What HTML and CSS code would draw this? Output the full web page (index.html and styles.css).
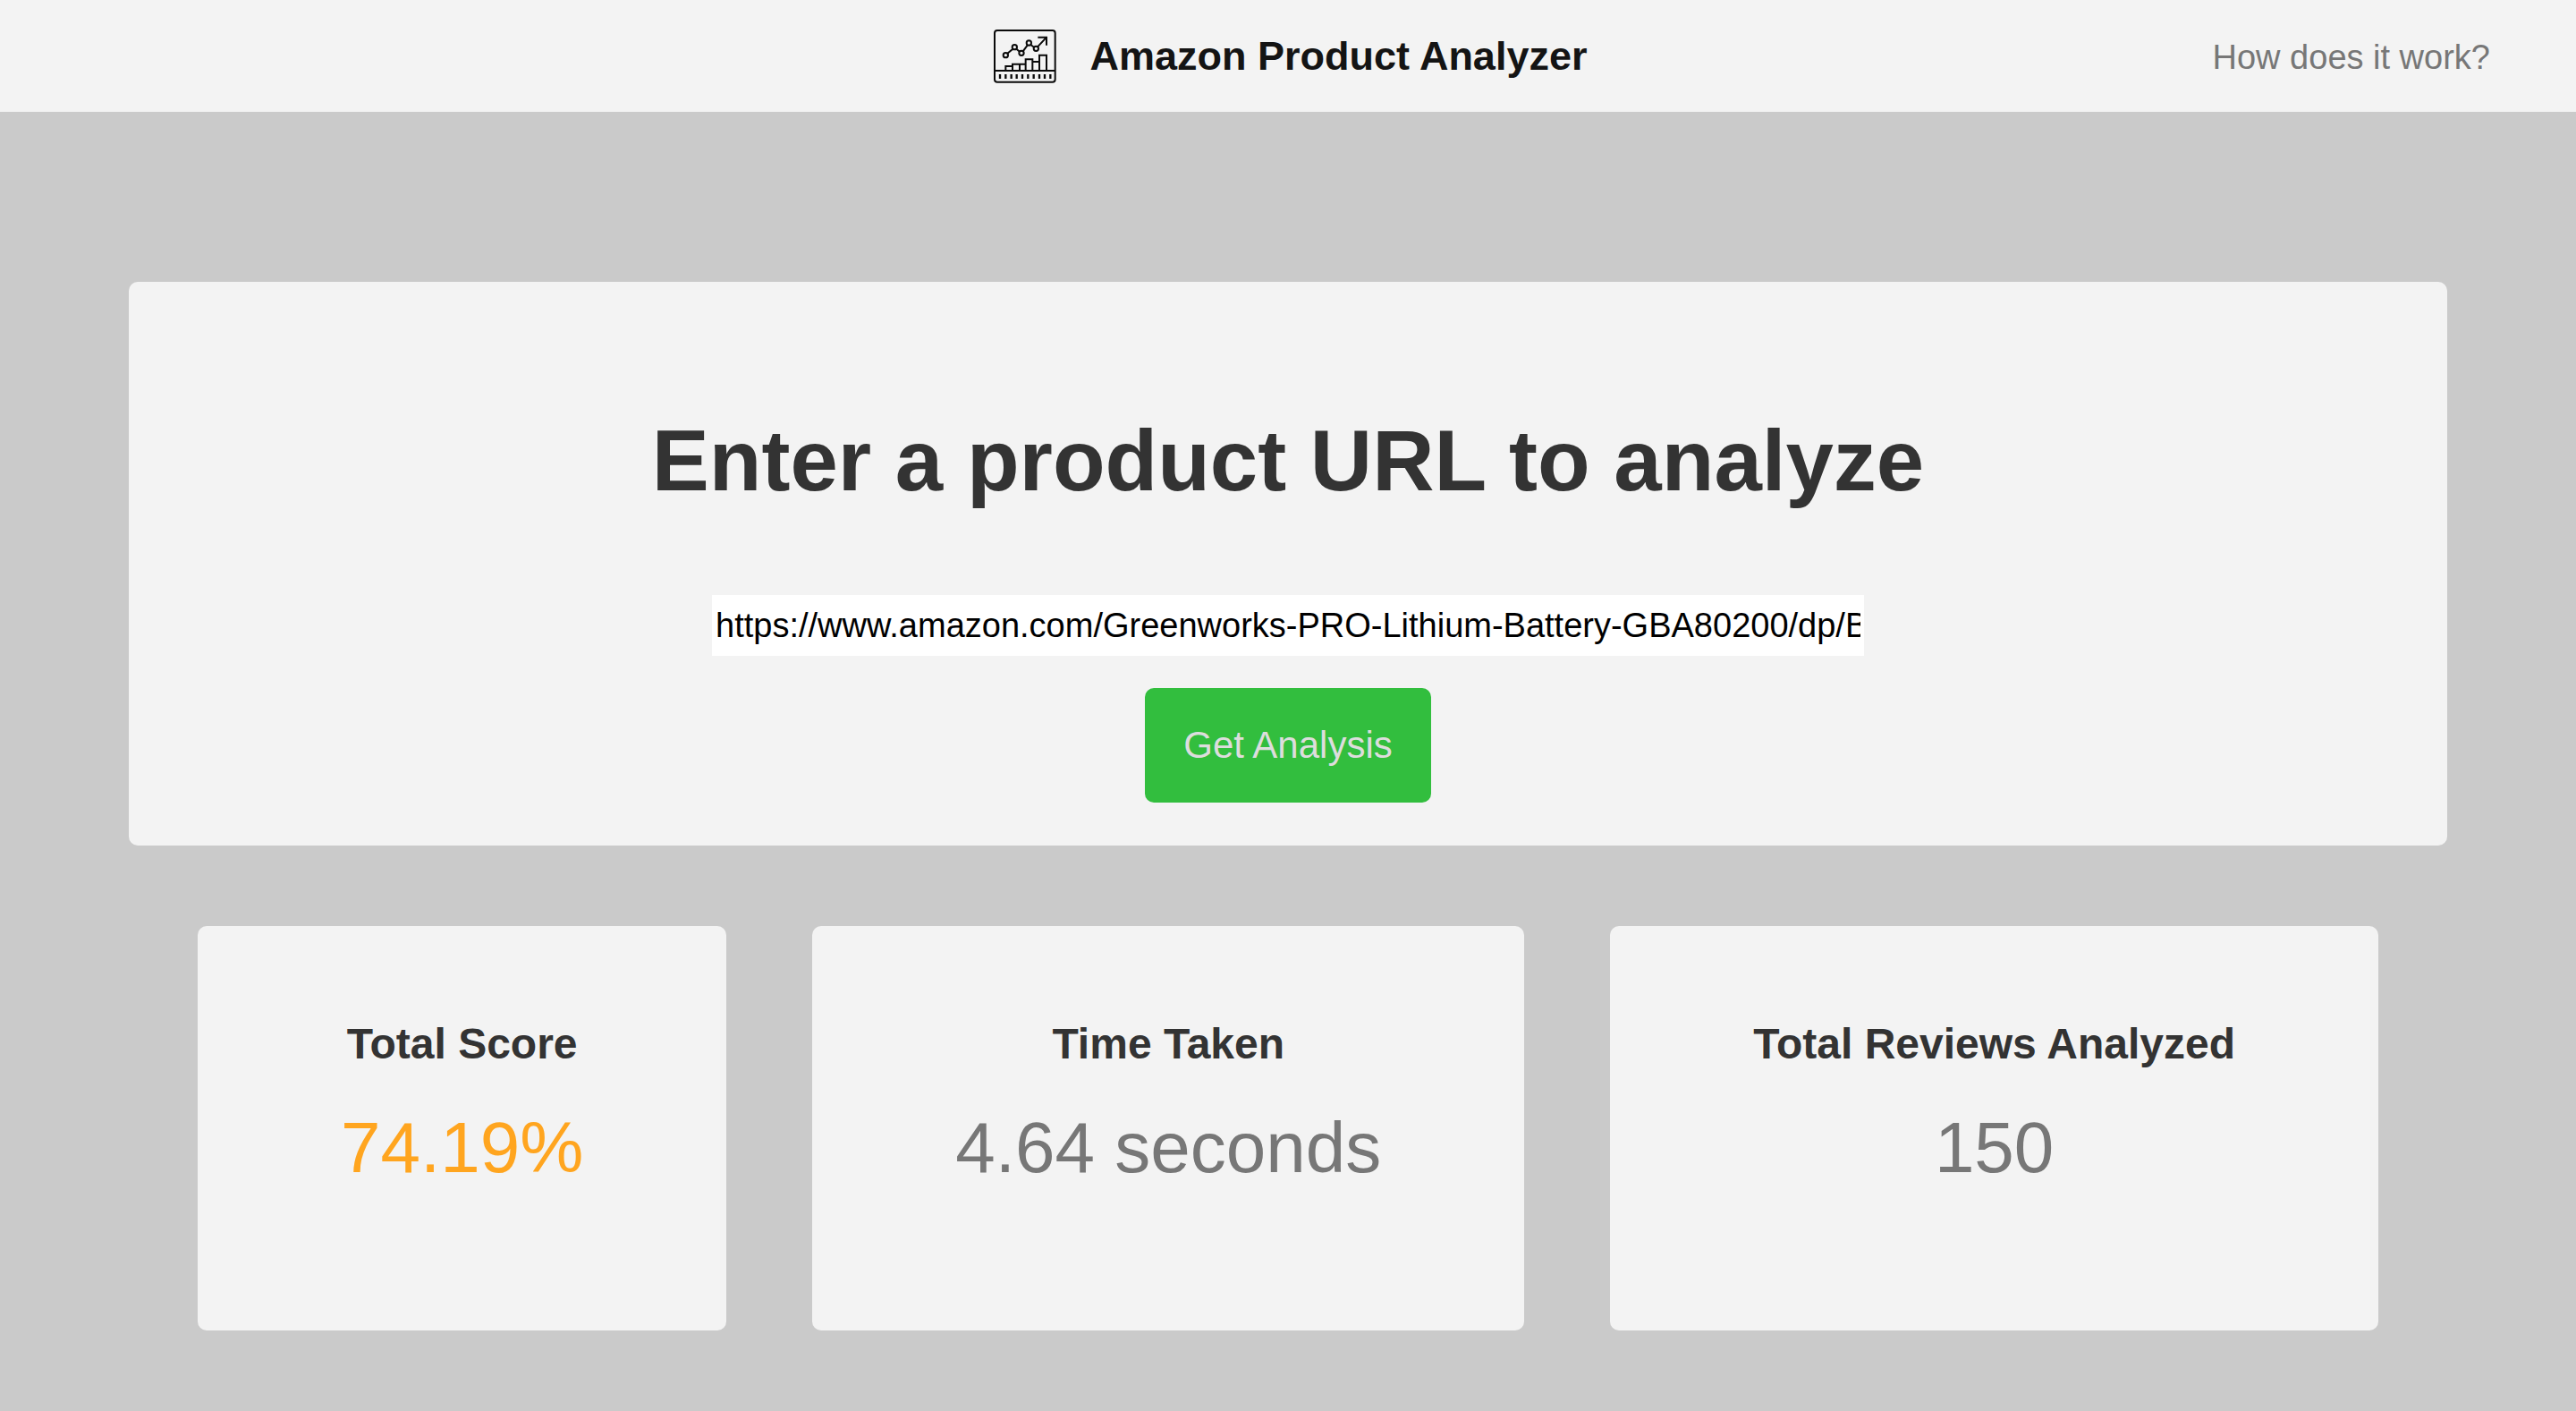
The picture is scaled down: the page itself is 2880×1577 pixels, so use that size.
FILE: index.html
```html
<!DOCTYPE html>
<html lang="en">
<head>
  <meta charset="utf-8">
  <meta name="viewport" content="width=device-width, initial-scale=1">
  <title>Amazon Product Analyzer</title>
  <link rel="stylesheet" href="styles.css">
</head>
<body>
  <header class="header">
    <div class="brand">
      <svg class="brand-icon" viewBox="49 36 225 183" fill="none" stroke="#0a0a0a" stroke-width="6" aria-hidden="true">
        <rect x="67" y="42" width="203" height="173" rx="9"/>
        <path d="M67 177H270"/>
        <path d="M104 177V162H127M127 177V155H151V177M151 155H171M171 177V139H194V177M194 147H217M217 177V125H241V177"/>
        <path d="M110 119L128 104M140 104L151 113M162 112L177 92M188 90L200 99M211 97L239 67M212 65H241V92"/>
        <circle cx="104" cy="125" r="8"/>
        <circle cx="134" cy="98" r="8"/>
        <circle cx="157" cy="118" r="8"/>
        <circle cx="182" cy="84" r="8"/>
        <circle cx="206" cy="103" r="8"/>
        <path stroke-width="7" d="M85 189V204M104 189V204M123 189V204M141 189V204M160 189V204M179 189V204M198 189V204M217 189V204M235 189V204M254 189V204"/>
      </svg>
      <span class="brand-name">Amazon Product Analyzer</span>
    </div>
    <nav class="nav">
      <a class="nav-link" href="#how">How does it work?</a>
    </nav>
  </header>

  <main class="main">
    <form class="panel">
      <h1 class="panel-title"><label for="product-url">Enter a product URL to analyze</label></h1>
      <input class="url-input" id="product-url" type="text" value="https://www.amazon.com/Greenworks-PRO-Lithium-Battery-GBA80200/dp/B">
      <button class="submit" type="button">Get Analysis</button>
    </form>

    <section class="results">
      <article class="card">
        <h2 class="card-label">Total Score</h2>
        <p class="card-value card-value-score">74.19%</p>
      </article>
      <article class="card">
        <h2 class="card-label">Time Taken</h2>
        <p class="card-value">4.64 seconds</p>
      </article>
      <article class="card">
        <h2 class="card-label">Total Reviews Analyzed</h2>
        <p class="card-value">150</p>
      </article>
    </section>
  </main>
</body>
</html>
```
FILE: styles.css
```css
* {
  box-sizing: border-box;
}

body {
  margin: 0;
  min-height: 100vh;
  background: #cacaca;
  color: #333;
  font-family: "Liberation Sans", Helvetica, Arial, sans-serif;
}

h1,
h2,
p {
  margin: 0;
}

.header {
  display: grid;
  grid-template-columns: 1fr auto 1fr;
  align-items: center;
  min-height: 125px;
  padding: 0 96px;
  background: #f3f3f3;
}

.brand {
  grid-column: 2;
  display: flex;
  align-items: center;
  gap: 38px;
}

.brand-icon {
  width: 75px;
  height: 61px;
}

.brand-name {
  color: #141414;
  font-size: 45px;
  font-weight: bold;
  line-height: 52px;
}

.nav {
  justify-self: end;
  padding-top: 2px;
}

.nav-link {
  color: #777;
  font-size: 38px;
  line-height: 44px;
  text-decoration: none;
}

.main {
  padding: 190px 5% 90px;
}

.panel {
  display: flex;
  flex-direction: column;
  align-items: center;
  padding: 144px 0 48px;
  border-radius: 10px;
  background: #f3f3f3;
}

.panel-title {
  margin-bottom: 94px;
  font-size: 96px;
  line-height: 112px;
  text-align: center;
}

.url-input {
  width: calc(50% - 8px);
  height: 68px;
  margin-bottom: 36px;
  padding: 0 4px;
  border: 0;
  border-radius: 0;
  background: #fff;
  color: #000;
  font-family: inherit;
  font-size: 38px;
}

.submit {
  min-width: 320px;
  padding: 40px;
  border: 0;
  border-radius: 10px;
  background: #32be3e;
  color: #ddd;
  font-family: inherit;
  font-size: 42px;
  line-height: 48px;
}

.results {
  display: flex;
  justify-content: center;
  gap: 96px;
  margin-top: 90px;
}

.card {
  padding: 104px 160px 156px;
  border-radius: 10px;
  background: #f3f3f3;
  text-align: center;
  white-space: nowrap;
}

.card-label {
  margin-bottom: 40px;
  font-size: 48px;
  line-height: 56px;
}

.card-value {
  color: #777;
  font-size: 80px;
  line-height: 96px;
}

.card-value-score {
  color: #ffa51f;
}
```
